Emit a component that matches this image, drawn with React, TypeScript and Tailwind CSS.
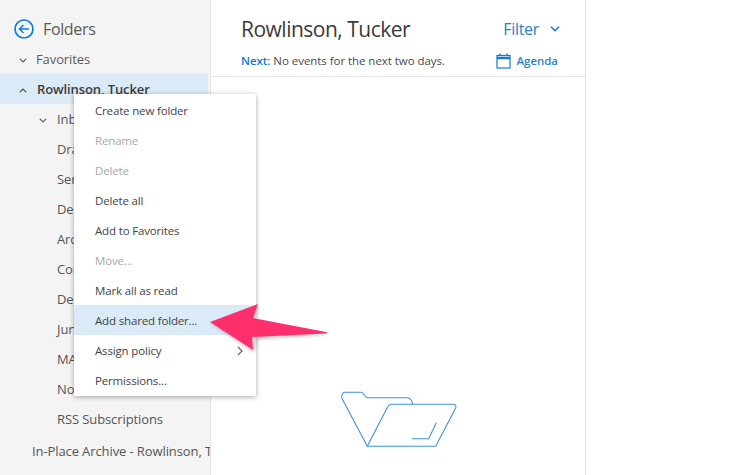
const font = { fontFamily: '"Open Sans", "Noto Sans", sans-serif' };

function Chevron({ up, className }: { up?: boolean; className: string }) {
  return (
    <svg viewBox="0 0 10 6" className={className} fill="none" stroke="currentColor" strokeWidth="1.5">
      <path d={up ? "M1 5.2 5 1.2l4 4" : "M1 .8l4 4 4-4"} />
    </svg>
  );
}

function SidebarRow({ label }: { label: string }) {
  return <div className="h-[30px] pt-[2px] flex items-center whitespace-nowrap overflow-hidden pl-[57px] text-[13px] tracking-[-0.1px] text-[#555]">{label}</div>;
}

function MenuItem({ label, disabled, active, arrow }: { label: string; disabled?: boolean; active?: boolean; arrow?: boolean }) {
  return (
    <div className={`h-[30px] pt-[1px] pl-[21px] pr-[13px] flex items-center justify-between text-[11.5px] tracking-[-0.16px] ${disabled ? "text-[#a9a9a9]" : "text-[#444]"} ${active ? "bg-[#daeaf7]" : ""}`}>
      <span>{label}</span>
      {arrow && (
        <svg viewBox="0 0 6 10" className="w-[6px] h-[10px] text-[#666]" fill="none" stroke="currentColor" strokeWidth="1.2">
          <path d="M1 1l4 4-4 4" />
        </svg>
      )}
    </div>
  );
}

export default function App() {
  return (
    <div style={font} className="relative w-[748px] h-[475px] overflow-hidden bg-white flex">
      <aside className="w-[211px] h-full shrink-0 bg-[#f4f4f4] border-r border-[#e3e3e3] overflow-hidden">
        <div className="h-[44px] pt-[13px] pl-[14px] flex items-center gap-[9px]">
          <svg viewBox="0 0 20 20" className="w-[20px] h-[20px] text-[#0f7ad5]" fill="none" stroke="currentColor">
            <circle cx="10" cy="10" r="9" strokeWidth="1.7" />
            <path d="M15 10H5.500M9.500 6 5.500 10l4 4" strokeWidth="1.5" />
          </svg>
          <span className="text-[16px] tracking-[-0.35px] text-[#5a5a5a]">Folders</span>
        </div>
        <div className="h-[30px] pt-[2px] flex items-center pl-[19px] gap-[9px] text-[13px] tracking-[-0.1px] text-[#5a5a5a]">
          <Chevron className="w-[8px] h-[5px] text-[#666]" />
          <span>Favorites</span>
        </div>
        <div className="h-[30px] w-[208px] pt-[2px] flex items-center pl-[19px] gap-[10px] bg-[#daeaf7] text-[13px] tracking-[-0.1px] font-semibold text-[#3c3c3c]">
          <Chevron up className="w-[8px] h-[5px] text-[#555]" />
          <span>Rowlinson, Tucker</span>
        </div>
        <div className="h-[30px] pt-[2px] flex items-center pl-[39px] gap-[10px] text-[13px] tracking-[-0.1px] text-[#555]">
          <Chevron className="w-[8px] h-[5px] text-[#666]" />
          <span>Inbox</span>
        </div>
        {["Drafts", "Sent Items", "Deleted Items", "Archive", "Conversation History", "Deleted", "Junk Email", "MAPI", "Notes", "RSS Subscriptions"].map((l) => (
          <SidebarRow key={l} label={l} />
        ))}
        <div className="h-[34px] pt-[2px] pl-[32px] flex items-center whitespace-nowrap overflow-hidden text-[13px] tracking-[-0.1px] text-[#555]">In-Place Archive - Rowlinson, Tucker</div>
      </aside>

      <main className="w-[375px] h-full shrink-0 border-r border-[#e3e3e3] flex flex-col">
        <div className="h-[77px] shrink-0 border-b border-[#e6e6e6] px-[30px] flex flex-col">
          <div className="h-[52px] pt-[7px] flex items-center justify-between">
            <span className="text-[21px] tracking-[-0.5px] text-[#3a3a3a]">Rowlinson, Tucker</span>
            <span className="flex items-center gap-[11px] text-[16px] tracking-[-0.3px] text-[#2f7fc9] -mr-[5px] -mt-[2px]">
              Filter
              <Chevron className="w-[10px] h-[6px] text-[#0f7ad5]" />
            </span>
          </div>
          <div className="flex items-center justify-between text-[11.5px] tracking-[-0.05px]">
            <span className="text-[#4a4a4a]"><span className="font-semibold text-[#0f7ad5]">Next:</span> No events for the next two days.</span>
            <span className="flex items-center gap-[6px] font-semibold text-[#2f7fc9] -mr-[3px]">
              <svg viewBox="0 0 15 16" className="w-[15px] h-[16px] text-[#0f7ad5] -ml-[2px]" fill="none" stroke="currentColor">
                <rect x="1" y="2.500" width="13" height="12.500" strokeWidth="1.2" />
                <path d="M1 5h13" strokeWidth="2.400" />
                <path d="M4 .5v2M11 .5v2" strokeWidth="1.400" />
              </svg>
              Agenda
            </span>
          </div>
        </div>
        <div className="flex-1 flex items-end justify-center pb-[26px] pl-[2px]">
          <svg viewBox="0 0 118 58" className="w-[118px] h-[58px]" fill="none" stroke="#3f92dc" strokeWidth="1.1">
            <path d="M27.300 55.300 2 7.500C1 4.500 2.500 1.300 5 1.300H21C24.500 1.300 24 6.700 27.500 6.700H67C70 6.700 72 9.500 72.700 13.300" />
            <path d="M27.300 55.300 47.700 15.700Q48.800 13.300 51.700 13.300H113.300Q116.700 13.300 115.700 17L95.700 55.300Z" />
            <path d="M71.700 47.700H88.700L96.300 31.700" />
          </svg>
        </div>
      </main>

      <div className="absolute left-[74px] top-[94px] w-[182px] bg-white pt-[1px] pb-[1px] shadow-[0_1px_5px_rgba(0,0,0,0.35)]">
        <MenuItem label="Create new folder" />
        <MenuItem label="Rename" disabled />
        <MenuItem label="Delete" disabled />
        <MenuItem label="Delete all" />
        <MenuItem label="Add to Favorites" />
        <MenuItem label="Move..." disabled />
        <MenuItem label="Mark all as read" />
        <MenuItem label="Add shared folder..." active />
        <MenuItem label="Assign policy" arrow />
        <MenuItem label="Permissions..." />
      </div>

      <svg className="absolute left-[205px] top-[300px]" width="130" height="56" viewBox="0 0 130 56">
        <path d="M6 24 53 7 49 21 122 35 52 40 49 53Z" fill="#000" opacity="0.18" style={{ filter: "blur(1.5px)" }} />
        <path d="M5 22 53 4 48 18 121 32C122.500 32.500 122.500 33.500 121 33.500L47 37 48 50Z" fill="#ff2e6c" />
      </svg>
    </div>
  );
}
